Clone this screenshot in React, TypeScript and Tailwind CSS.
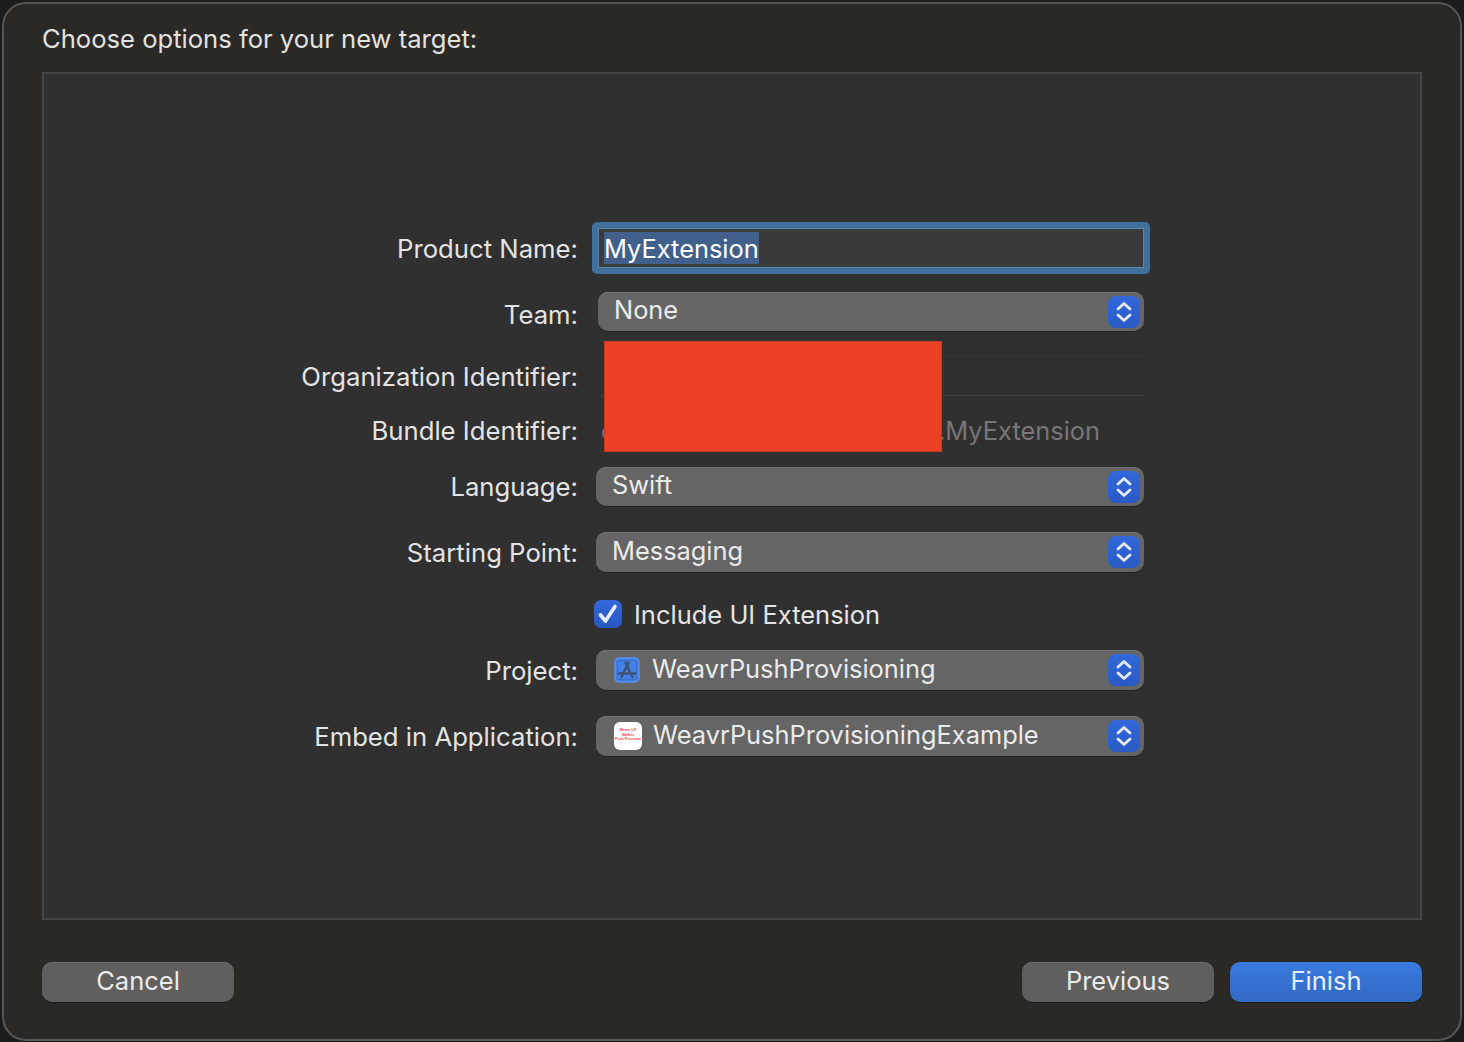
import React from 'react';

const font = 'font-["Inter","Liberation_Sans",sans-serif]';

const Stepper = () => (
  <div className="absolute right-[4px] top-1/2 -translate-y-1/2 flex h-[32px] w-[32px] items-center justify-center rounded-[8px] bg-gradient-to-b from-[#3268dc] to-[#2a59c4]">
    <svg width="18" height="24" viewBox="0 0 18 24" fill="none" stroke="#e4ebfb" strokeWidth="2.8" strokeLinecap="round" strokeLinejoin="round">
      <path d="M3 9 9 3.5 15 9" />
      <path d="M3 15 9 20.5 15 15" />
    </svg>
  </div>
);

const Popup = ({ children, className }: { children: React.ReactNode; className: string }) => (
  <div className={`relative flex items-center rounded-[10px] bg-[#656565] text-[25.4px] leading-none text-[#ebebeb] shadow-[inset_0_1px_0_#747474,0_1px_1px_#222] ${className}`}>
    {children}
    <Stepper />
  </div>
);

const Row = ({ label, className, labelClass, children }: { label: string; className: string; labelClass?: string; children: React.ReactNode }) => (
  <div className={`flex ${className}`}>
    <div className={`w-[534px] shrink-0 text-right text-[25.7px] leading-none text-[#e4e4e4] ${labelClass ?? ''}`}>{label}</div>
    {children}
  </div>
);

const Button = ({ children, primary }: { children: React.ReactNode; primary?: boolean }) => (
  <div
    className={`flex h-[40px] w-[192px] items-center justify-center rounded-[10px] pb-[2px] text-[25.5px] leading-none ${
      primary
        ? 'bg-gradient-to-b from-[#3a7ae0] to-[#3269c2] text-[#e8effb] shadow-[0_1px_1px_#1a1a18]'
        : 'bg-[#605f5d] text-[#ebebeb] shadow-[inset_0_1px_0_#6e6d6b,0_1px_1px_#1a1a18]'
    }`}
  >
    {children}
  </div>
);

const XcodeProjectIcon = () => (
  <svg width="26" height="26" viewBox="0 0 26 26" fill="none" className="ml-[18px] mr-[12px] shrink-0">
    <rect x="1" y="1" width="24" height="24" rx="4" fill="#4580e6" stroke="#5b93f2" strokeWidth="1.4" />
    <rect x="3.4" y="3.4" width="19.2" height="19.2" rx="2" fill="#4580e6" stroke="#3566bc" strokeWidth="0.8" />
    <g stroke="#3d5270" strokeWidth="2.4" strokeLinecap="round">
      <path d="M14.5 5.5 7.5 20" />
      <path d="M11.5 5.5 18.5 20" />
      <path d="M5 16.5H21" />
    </g>
  </svg>
);

const AppIcon = () => (
  <div className="ml-[18px] mr-[11px] flex h-[28px] w-[28px] shrink-0 flex-col items-center justify-center rounded-[6px] bg-white pb-[2px] text-center font-['Liberation_Sans',sans-serif] text-[3.6px] font-bold leading-[4.4px] text-[#ee4444]">
    <span>Weavr UX</span>
    <span>Wallets</span>
    <span>Push Provision</span>
  </div>
);

export default function App() {
  return (
    <div className={`h-[1042px] w-[1464px] overflow-hidden bg-[#1c1c1b] px-[2px] pt-[2px] ${font}`}>
      <div className="h-[1039px] w-[1460px] rounded-[24px] border-2 border-[#565654] bg-[#2a2925] px-[38px]">
        <div className="flex h-[68px] items-center pt-[1px] text-[25.6px] leading-none text-[#e2e2e1]">
          Choose options for your new target:
        </div>

        <div className="relative h-[848px] w-[1380px] border-2 border-[#454545] bg-[#303030] pt-[148px]">
          <Row label="Product Name:" className="h-[52px]" labelClass="pt-[14px]">
            <div className="ml-[14px] flex h-[52px] w-[558px] items-center rounded-[5px] border-[6px] border-[#41709c] bg-[#3a3a3a] pl-[6px] text-[25.4px] leading-none text-white outline outline-1 -outline-offset-[7px] outline-[#5b87ad]">
              <span className="flex h-[32px] items-center bg-[#41618c] pt-[2px]">MyExtension</span>
            </div>
          </Row>

          <Row label="Team:" className="mt-[18px] h-[39px]" labelClass="pt-[10px]">
            <Popup className="ml-[20px] h-[39px] w-[546px] pb-[3px] pl-[16px]">None</Popup>
          </Row>

          <Row label="Organization Identifier:" className="mt-[25px] h-[40px]" labelClass="pt-[8px]">
            <div className="ml-[20px] h-[40px] w-[546px] border-b border-[#3e3e3e] bg-[#2f2f2f] shadow-[inset_0_1px_0_#353535]" />
          </Row>

          <Row label="Bundle Identifier:" className="mt-[15px] h-[40px]" labelClass="pt-[7px]">
            <div className="ml-[20px] flex h-[40px] w-[546px] items-center pl-[3px] text-[25.4px] leading-none text-[#777777]">
              <span className="w-[337px] shrink-0">c</span>
              <span>.MyExtension</span>
            </div>
          </Row>

          <Row label="Language:" className="mt-[16px] h-[39px]" labelClass="pt-[7px]">
            <Popup className="ml-[18px] h-[39px] w-[548px] pb-[3px] pl-[16px]">Swift</Popup>
          </Row>

          <Row label="Starting Point:" className="mt-[26px] h-[40px]" labelClass="pt-[8px]">
            <Popup className="ml-[18px] h-[40px] w-[548px] pb-[2px] pl-[16px]">Messaging</Popup>
          </Row>

          <div className="mt-[28px] flex h-[28px] items-center pl-[550px]">
            <div className="flex h-[28px] w-[28px] items-center justify-center rounded-[7px] bg-gradient-to-b from-[#3468dc] to-[#2a58c2]">
              <svg width="22" height="22" viewBox="0 0 22 22" fill="none" stroke="#e6ecfb" strokeWidth="3.6" strokeLinecap="round" strokeLinejoin="round">
                <path d="M3.5 12 8.5 18 18 3.5" />
              </svg>
            </div>
            <span className="ml-[12px] pt-[2px] text-[25.5px] leading-none text-[#e4e4e4]">Include UI Extension</span>
          </div>

          <Row label="Project:" className="mt-[22px] h-[40px]" labelClass="pt-[8px]">
            <Popup className="ml-[18px] h-[40px] w-[548px]">
              <XcodeProjectIcon />
              <span className="pb-[2px]">WeavrPushProvisioning</span>
            </Popup>
          </Row>

          <Row label="Embed in Application:" className="mt-[26px] h-[40px]" labelClass="pt-[8px]">
            <Popup className="ml-[18px] h-[40px] w-[548px]">
              <AppIcon />
              <span className="pb-[2px]">WeavrPushProvisioningExample</span>
            </Popup>
          </Row>

          {/* redaction block over the identifiers */}
          <div className="absolute left-[560px] top-[267px] h-[111px] w-[338px] border border-[#c93a20] bg-[#ea4025]" />
        </div>

        <div className="mt-[42px] flex items-center gap-[16px]">
          <Button>Cancel</Button>
          <div className="flex-1" />
          <Button>Previous</Button>
          <Button primary>Finish</Button>
        </div>
      </div>
    </div>
  );
}
